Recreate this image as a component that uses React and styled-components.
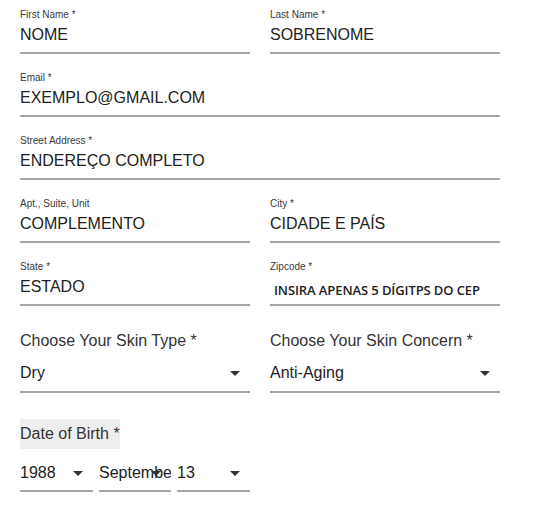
import React from 'react';
import styled, { createGlobalStyle } from 'styled-components';

const GlobalStyle = createGlobalStyle`
    body {
        margin: 0;
        background: #fff;
        font-family: "Liberation Sans", Arial, sans-serif;
    }
`;

const Form = styled.div`
    width: 480px;
    padding: 9px 0 0 20px;
    display: flex;
    flex-direction: column;
`;

const Grid = styled.div`
    display: grid;
    grid-template-columns: 230px 230px;
    column-gap: 20px;
    row-gap: 18px;
`;

const Field = styled.div`
    display: flex;
    flex-direction: column;
    grid-column: ${props => (props.full ? '1 / span 2' : 'auto')};
`;

const SmallLabel = styled.span`
    font-size: 10px;
    line-height: 12px;
    color: #3a3a3a;
`;

const Value = styled.div`
    margin-top: 4px;
    padding: 0 0 7px;
    font-size: 16px;
    line-height: 20px;
    color: #212121;
    border-bottom: 2px solid #a6a6a8;
    white-space: nowrap;
`;

// the zipcode placeholder uses a different bold font
const ZipValue = styled(Value)`
    padding: 3px 0 4px 4px;
    font-family: "Open Sans", sans-serif;
    font-weight: 600;
    font-size: 13px;
    letter-spacing: -0.1px;
`;

const SelectSection = styled.div`
    margin-top: 25px;
    display: grid;
    grid-template-columns: 230px 230px;
    column-gap: 20px;
`;

const BigLabel = styled.span`
    font-size: 16px;
    line-height: 20px;
    color: #333;
`;

const SelectBox = styled.div`
    position: relative;
    margin-top: ${props => props.top || 0}px;
    padding-bottom: ${props => props.bottom || 8}px;
    border-bottom: 2px solid #a6a6a8;
    font-size: 16px;
    line-height: 20px;
    color: #212121;
    overflow: hidden;
    white-space: nowrap;
`;

const Arrow = styled.svg`
    position: absolute;
    right: 10px;
    top: 8px;
    width: 10px;
    height: 5px;
    fill: #333;
`;

const DateBlock = styled.div`
    margin-top: 26px;
    display: flex;
    flex-direction: column;
`;

const DateLabel = styled.span`
    align-self: flex-start;
    font-size: 16px;
    line-height: 30px;
    color: #333;
    background: #eeeeee;
`;

const DateRow = styled.div`
    margin-top: 14px;
    display: grid;
    grid-template-columns: 73px 72px 73px;
    column-gap: 6px;
`;

const Select = ({ value, top, bottom }) => (
    <SelectBox top={top} bottom={bottom}>
        {value}
        <Arrow viewBox="0 0 10 5"><polygon points="0,0 10,0 5,5" /></Arrow>
    </SelectBox>
);

const TextField = ({ label, value, full }) => (
    <Field full={full}>
        <SmallLabel>{label}</SmallLabel>
        <Value>{value}</Value>
    </Field>
);

export default function App() {
    return (
        <Form>
            <GlobalStyle />
            <Grid>
                <TextField label="First Name *" value="NOME" />
                <TextField label="Last Name *" value="SOBRENOME" />
                <TextField full label="Email *" value="EXEMPLO@GMAIL.COM" />
                <TextField full label="Street Address *" value="ENDEREÇO COMPLETO" />
                <TextField label="Apt., Suite, Unit" value="COMPLEMENTO" />
                <TextField label="City *" value="CIDADE E PAÍS" />
                <TextField label="State *" value="ESTADO" />
                <Field>
                    <SmallLabel>Zipcode *</SmallLabel>
                    <ZipValue>INSIRA APENAS 5 DÍGITPS DO CEP</ZipValue>
                </Field>
            </Grid>

            <SelectSection>
                <Field>
                    <BigLabel>Choose Your Skin Type *</BigLabel>
                    <Select value="Dry" top={12} />
                </Field>
                <Field>
                    <BigLabel>Choose Your Skin Concern *</BigLabel>
                    <Select value="Anti-Aging" top={12} />
                </Field>
            </SelectSection>

            <DateBlock>
                <DateLabel>Date of Birth *</DateLabel>
                <DateRow>
                    <Select value="1988" bottom={7} />
                    <Select value="September" bottom={7} />
                    <Select value="13" bottom={7} />
                </DateRow>
            </DateBlock>
        </Form>
    );
}
